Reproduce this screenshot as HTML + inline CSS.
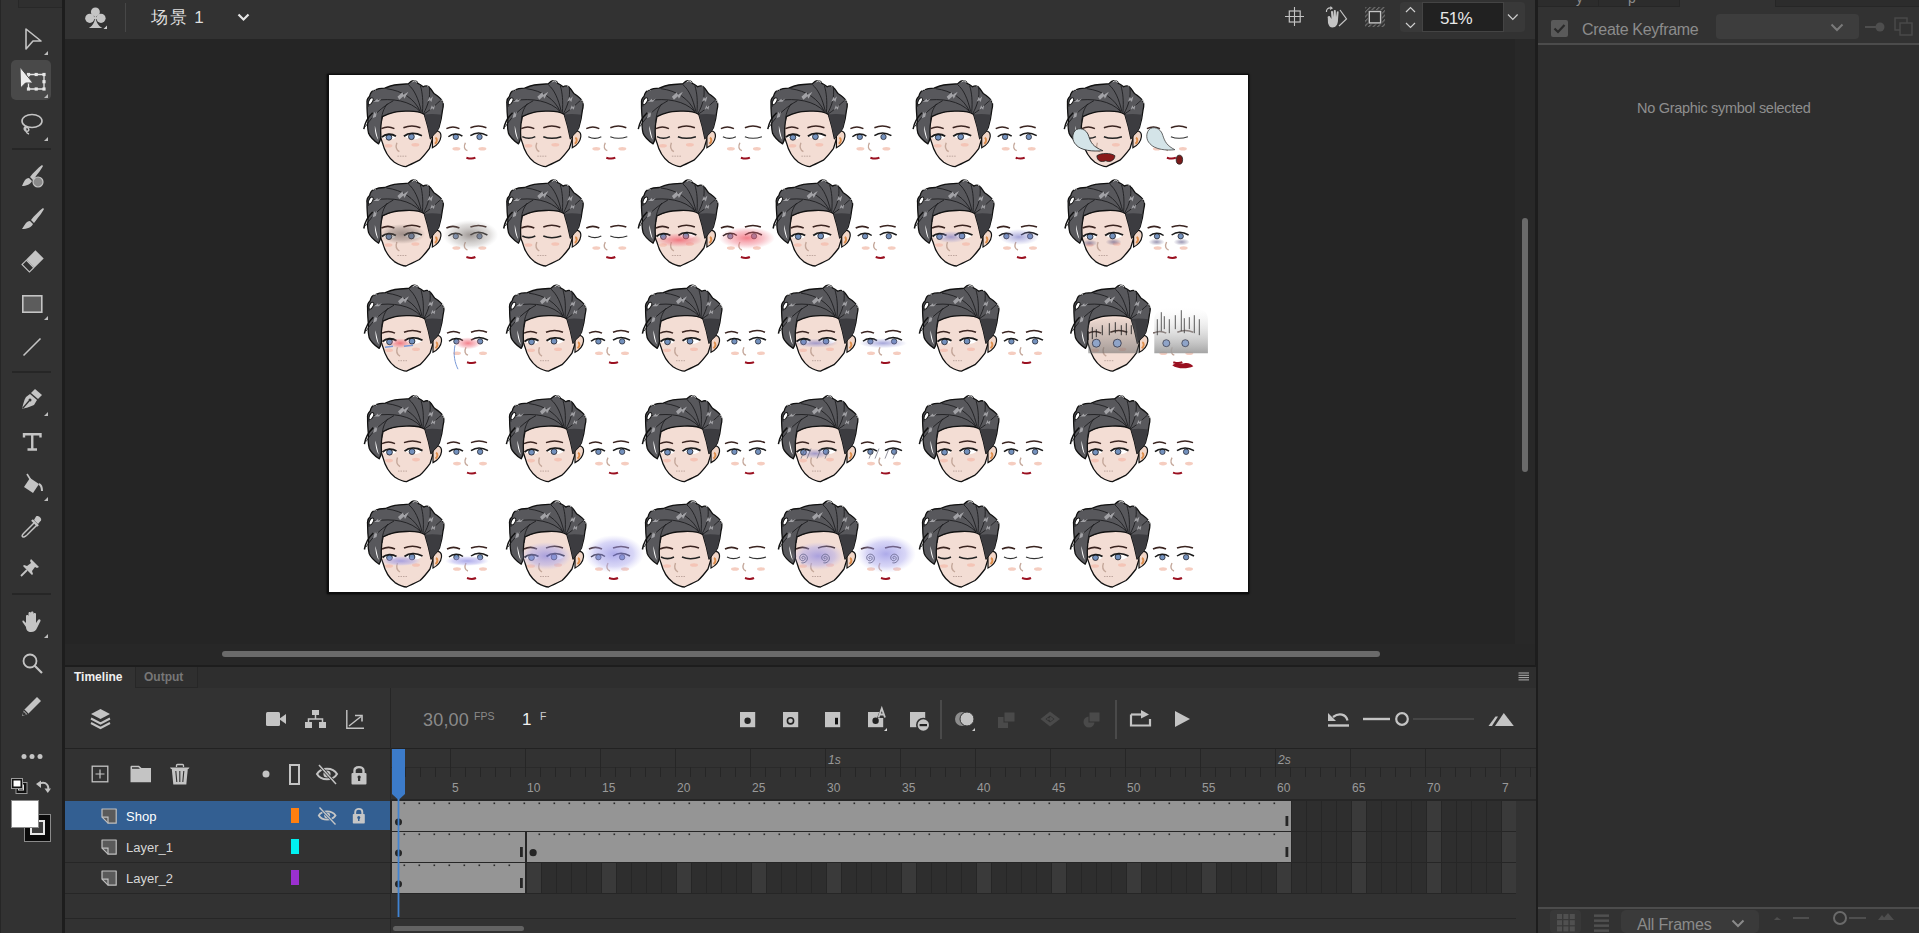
<!DOCTYPE html>
<html><head><meta charset="utf-8">
<style>
*{margin:0;padding:0;box-sizing:border-box}
html,body{width:1919px;height:933px;overflow:hidden;background:#323232;font-family:"Liberation Sans",sans-serif}
.a{position:absolute;white-space:nowrap}
svg{position:absolute;overflow:visible}
</style></head><body>
<div class="a" style="left:0;top:0;width:62px;height:933px;background:#323232"></div>
<div class="a" style="left:0;top:0;width:1px;height:933px;background:#262626"></div>
<div class="a" style="left:18px;top:0;width:44px;height:8px;border:1px solid #282828;border-top:0;border-right:0;background:#2f2f2f"></div>
<div class="a" style="left:62px;top:0;width:3px;height:933px;background:#1d1d1d"></div>
<div class="a" style="left:11px;top:60px;width:40px;height:40px;border-radius:5px;background:#494949"></div>
<div class="a" style="left:12px;top:148px;width:39px;height:2px;background:#262626"></div>
<div class="a" style="left:12px;top:371px;width:39px;height:2px;background:#262626"></div>
<div class="a" style="left:12px;top:593px;width:39px;height:2px;background:#262626"></div>
<svg style="left:24px;top:28px" width="20" height="24"><path d="M2,1 L17,13 L9,13 L2,21 Z" fill="none" stroke="#c4c4c4" stroke-width="1.6" stroke-linejoin="round"/></svg>
<svg style="left:44px;top:51px" width="4" height="4"><path d="M4,0 L4,4 L0,4 Z" fill="#bdbdbd"/></svg>
<svg style="left:18px;top:65px" width="30" height="28"><path d="M10.5,9.5 H26 V24 H10.5 Z" fill="none" stroke="#e6e6e6" stroke-width="1.3"/><rect x="8.9" y="7.9" width="3.2" height="3.2" fill="#e6e6e6"/><rect x="16.599999999999998" y="7.9" width="3.2" height="3.2" fill="#e6e6e6"/><rect x="24.4" y="7.9" width="3.2" height="3.2" fill="#e6e6e6"/><rect x="24.4" y="15.1" width="3.2" height="3.2" fill="#e6e6e6"/><rect x="24.4" y="22.4" width="3.2" height="3.2" fill="#e6e6e6"/><rect x="16.599999999999998" y="22.4" width="3.2" height="3.2" fill="#e6e6e6"/><rect x="8.9" y="22.4" width="3.2" height="3.2" fill="#e6e6e6"/><rect x="8.9" y="15.1" width="3.2" height="3.2" fill="#e6e6e6"/><path d="M2,2 L2.5,23 L7.5,18 L15,18 Z" fill="#ededed" stroke="#494949" stroke-width="1"/></svg>
<svg style="left:44px;top:94px" width="4" height="4"><path d="M4,0 L4,4 L0,4 Z" fill="#bdbdbd"/></svg>
<svg style="left:20px;top:113px" width="24" height="22"><ellipse cx="12" cy="8" rx="10" ry="6.5" fill="none" stroke="#c4c4c4" stroke-width="1.6"/><path d="M6,13 C3,15 4,19 8,18 C10,17 8,14 6,14 C5,17 6,20 9,21" fill="none" stroke="#c4c4c4" stroke-width="1.5"/></svg>
<svg style="left:44px;top:137px" width="4" height="4"><path d="M4,0 L4,4 L0,4 Z" fill="#bdbdbd"/></svg>
<svg style="left:22px;top:164px" width="22" height="24"><path d="M20,1 C16,4 11,9 8,13 L11,16 C14,12 19,6 21,2 Z" fill="#c4c4c4"/><path d="M7,14 C3,14 2,18 0,22 C4,22 9,20 10,17 Z" fill="#c4c4c4"/><circle cx="16" cy="18" r="5" fill="#8a8a8a" stroke="#c4c4c4" stroke-width="1.2"/></svg>
<svg style="left:22px;top:207px" width="22" height="23"><path d="M21,1 C17,4 12,9 9,13 L12,16 C15,12 20,6 22,2 Z" fill="#c4c4c4"/><path d="M8,14 C4,14 3,18 0,22 C5,22 10,20 11,17 Z" fill="#c4c4c4"/></svg>
<svg style="left:21px;top:250px" width="23" height="23"><g transform="rotate(-45 11.5 11.5) translate(11.5 11.5) scale(0.87) translate(-11.5 -11.5)"><rect x="0.5" y="5.5" width="7" height="12" fill="none" stroke="#c4c4c4" stroke-width="1.3"/><rect x="8" y="4.8" width="15" height="13.4" fill="#c4c4c4"/></g></svg>
<svg style="left:22px;top:295px" width="21" height="19"><rect x="0.8" y="0.8" width="19" height="16.4" fill="#5c5c5c" stroke="#c4c4c4" stroke-width="1.6"/></svg>
<svg style="left:44px;top:316px" width="4" height="4"><path d="M4,0 L4,4 L0,4 Z" fill="#bdbdbd"/></svg>
<svg style="left:22px;top:337px" width="20" height="20"><path d="M1.5,18.5 L18.5,1.5" stroke="#c4c4c4" stroke-width="1.6"/></svg>
<svg style="left:21px;top:388px" width="22" height="22"><path d="M14,1 L21,7 L17,11 L10,5 Z" fill="#c4c4c4"/><path d="M9,6 L16,12 L13,17 C9,19 4,20 1,21 C2,17 3,12 5,9 Z" fill="#c4c4c4"/><path d="M1.5,20.5 L8,13" stroke="#323232" stroke-width="1.3"/><circle cx="9" cy="12" r="1.5" fill="#323232"/></svg>
<svg style="left:44px;top:412px" width="4" height="4"><path d="M4,0 L4,4 L0,4 Z" fill="#bdbdbd"/></svg>
<svg style="left:23px;top:433px" width="19" height="18"><path d="M1,4.5 V1.2 H17.5 V4.5 M9.25,1.2 V16.5 M4.5,16.5 H14" fill="none" stroke="#c4c4c4" stroke-width="2.4"/></svg>
<svg style="left:22px;top:473px" width="22" height="22"><path d="M8,5 L17,11 L11,20 L2,14 Z" fill="#c4c4c4"/><path d="M5,1 L10,9" stroke="#c4c4c4" stroke-width="1.6"/><path d="M17,11 C19,12 20,15 20,18" fill="none" stroke="#c4c4c4" stroke-width="2"/></svg>
<svg style="left:44px;top:497px" width="4" height="4"><path d="M4,0 L4,4 L0,4 Z" fill="#bdbdbd"/></svg>
<svg style="left:20px;top:515px" width="23" height="23"><path d="M16,1.5 C18,0 22,3 21,5.5 L18,9 L14,5 Z" fill="#c4c4c4"/><path d="M12,5 L18,11" stroke="#c4c4c4" stroke-width="2.4"/><path d="M14,8 L4,18 C2,20 1.5,21.5 3,22 C4.5,22.5 5.5,21 7,20 L17,10" fill="none" stroke="#c4c4c4" stroke-width="1.5"/></svg>
<svg style="left:20px;top:558px" width="20" height="19"><path d="M11,1 L19,9 L17,10 L15,9 L12,13 L13,16 L12,17 L3,8 L4,7 L7,8 L11,5 L10,3 Z" fill="#c4c4c4"/><path d="M1,18 L7,12" stroke="#c4c4c4" stroke-width="1.8"/></svg>
<svg style="left:22px;top:611px" width="20" height="21"><path d="M4,11 L4,5 C4,3.5 6.5,3.5 6.5,5 L6.5,9 L6.5,2 C6.5,0.5 9,0.5 9,2 L9,9 L9,1.5 C9,0 11.5,0 11.5,1.5 L11.5,9 L11.5,3 C11.5,1.5 14,1.5 14,3 L14,12 L16,9 C17,7.5 19,8.5 18.5,10 L15,17 C14,19.5 12,21 9,21 C6,21 4,19 4,16 Z M4,12 L2,10 C1,9 0,10 0.5,11 L4,16" fill="#c4c4c4"/></svg>
<svg style="left:44px;top:634px" width="4" height="4"><path d="M4,0 L4,4 L0,4 Z" fill="#bdbdbd"/></svg>
<svg style="left:22px;top:653px" width="21" height="22"><circle cx="8" cy="8" r="6.5" fill="none" stroke="#c4c4c4" stroke-width="1.8"/><path d="M12.5,12.5 L20,20" stroke="#c4c4c4" stroke-width="2.2"/></svg>
<svg style="left:21px;top:696px" width="21" height="21"><path d="M16,1 L20,5 L7,18 L1,20 L3,14 Z" fill="#c4c4c4"/><path d="M3,14 L7,18" stroke="#323232" stroke-width="1.2"/><path d="M2.5,15.5 L1.5,19.5 L5.5,18.5" fill="#323232"/></svg>
<svg style="left:21px;top:753px" width="22" height="7"><circle cx="3" cy="3.5" r="2.5" fill="#c4c4c4"/><circle cx="11" cy="3.5" r="2.5" fill="#c4c4c4"/><circle cx="19" cy="3.5" r="2.5" fill="#c4c4c4"/></svg>
<svg style="left:11px;top:778px" width="17" height="16"><rect x="5" y="4.5" width="11" height="11" fill="#111" stroke="#9a9a9a" stroke-width="1"/><rect x="7.5" y="7" width="5" height="5" fill="none" stroke="#ddd" stroke-width="1"/><rect x="0.5" y="0.5" width="11" height="10" fill="#111" stroke="#9a9a9a" stroke-width="1"/><rect x="2.5" y="2.5" width="7" height="6" fill="#fff"/></svg>
<svg style="left:36px;top:779px" width="15" height="15"><path d="M3,5.5 C5,3 9,3 11,5.5 C12.5,7.5 12.5,9 12,10" fill="none" stroke="#c4c4c4" stroke-width="2"/><path d="M0,5 L5,1.5 L5,9 Z" fill="#c4c4c4"/><path d="M8.5,9.5 L15,9.5 L11.8,14 Z" fill="#c4c4c4"/></svg>
<div class="a" style="left:24px;top:814px;width:27px;height:28px;background:#0a0a0a;border:1px solid #8a8a8a"></div>
<div class="a" style="left:30px;top:820px;width:15px;height:15px;border:2px solid #e8e8e8;background:#3c3c3c"></div>
<div class="a" style="left:11px;top:800px;width:28px;height:28px;background:#fff;border:1px solid #8a8a8a"></div>
<div class="a" style="left:65px;top:0;width:1471px;height:39px;background:#323232"></div>
<svg style="left:85px;top:7px" width="23" height="22"><circle cx="10.4" cy="4.9" r="4.5" fill="#c4c4c4"/><circle cx="4.8" cy="11.3" r="4.6" fill="#c4c4c4"/><circle cx="16" cy="11.3" r="4.6" fill="#c4c4c4"/><path d="M10.4,8 C10.4,14 8,19 3.9,21 L17.3,21 C13,19 10.4,14 10.4,8 Z" fill="#c4c4c4"/><path d="M10.4,8 L8,12 L12.8,12 Z" fill="#c4c4c4"/><path d="M22,18.5 L22,22 L18.5,22 Z" fill="#ccc"/></svg>
<div class="a" style="left:125px;top:3px;width:1px;height:29px;background:#474747"></div>
<div class="a" style="left:151px;top:6px;font-size:17px;color:#dedede;line-height:24px;letter-spacing:1.5px">场景 1</div>
<svg style="left:237px;top:13px" width="13" height="9"><path d="M1.5,1.5 L6.5,6.5 L11.5,1.5" fill="none" stroke="#e6e6e6" stroke-width="2.2"/></svg>
<svg style="left:1285px;top:7px" width="19" height="19"><path d="M9.5,0 V19 M0,9.5 H19" stroke="#c4c4c4" stroke-width="1.1"/><rect x="4.3" y="4" width="10.9" height="11" fill="none" stroke="#c4c4c4" stroke-width="1.2"/></svg>
<svg style="left:1324px;top:6px" width="24" height="23"><path d="M19.5,4 L26,13 L18.5,20" transform="translate(-3.5,0)" fill="none" stroke="#c4c4c4" stroke-width="1.2"/><path d="M3.8,12 C3,10.5 5,9.5 6,10.5 L7.5,13 L7,6 C7,4.8 9,4.8 9,6 L9.5,11 L9.8,5 C9.8,3.8 11.8,3.8 11.8,5 L12,11 L12.8,6 C13,4.8 14.8,5 14.6,6.2 L14,14 C14,18 12,21.5 8.5,21.5 C6,21.5 5,20 4,17 Z" fill="#c4c4c4"/><path d="M2.5,6 C2,3.5 4,1.5 7,2" fill="none" stroke="#c4c4c4" stroke-width="1.2"/><path d="M6.5,0 L9,2.2 L6,4 Z" fill="#c4c4c4"/></svg>
<svg style="left:1365px;top:7px" width="21" height="20"><defs><pattern id="hat" width="3.2" height="3.2" patternUnits="userSpaceOnUse" patternTransform="rotate(45)"><rect width="1.2" height="3.2" fill="#727272"/></pattern></defs><rect x="0" y="0" width="20" height="20" rx="1" fill="url(#hat)"/><rect x="2.8" y="3" width="14.4" height="14.4" fill="#323232"/><rect x="4.3" y="4.5" width="11.3" height="11.4" fill="none" stroke="#c4c4c4" stroke-width="1.4"/></svg>
<div class="a" style="left:1400px;top:2px;width:125px;height:30px;border-radius:4px;background:#393939"></div>
<div class="a" style="left:1422px;top:2px;width:82px;height:30px;background:#212121;border:1px solid #444"></div>
<svg style="left:1405px;top:6px" width="12" height="23"><path d="M1,6 L5.5,1.5 L10,6 M1,17 L5.5,21.5 L10,17" fill="none" stroke="#cfcfcf" stroke-width="1.2"/></svg>
<div class="a" style="left:1440px;top:9px;font-size:17px;color:#e8e8e8;line-height:20px;letter-spacing:-0.7px">51%</div>
<svg style="left:1507px;top:13px" width="12" height="8"><path d="M1,1.5 L5.8,6.3 L10.6,1.5" fill="none" stroke="#cfcfcf" stroke-width="1.2"/></svg>
<div class="a" style="left:65px;top:39px;width:1471px;height:626px;background:#252525"></div>
<div class="a" style="left:1515px;top:39px;width:21px;height:626px;background:#282828"></div>
<div class="a" style="left:65px;top:644px;width:1470px;height:21px;background:#272727"></div>
<div class="a" style="left:327px;top:74px;width:922px;height:520px;background:#0e0e0e;box-shadow:0 0 2px #000"></div>
<div id="stage" class="a" style="left:329px;top:75px;width:919px;height:517px;background:#fff;overflow:hidden"><svg width="919" height="517" viewBox="0 0 919 517" style="left:0;top:0"><defs><radialGradient id="rgGray"><stop offset="0" stop-color="#6a5e5a" stop-opacity="0.6"/><stop offset="0.6" stop-color="#6a5e5a" stop-opacity="0.35"/><stop offset="1" stop-color="#6a5e5a" stop-opacity="0"/></radialGradient>
<radialGradient id="rgGray2"><stop offset="0" stop-color="#6a605c" stop-opacity="0.65"/><stop offset="0.7" stop-color="#9a9490" stop-opacity="0.3"/><stop offset="1" stop-color="#bbb" stop-opacity="0"/></radialGradient>
<radialGradient id="rgRed"><stop offset="0" stop-color="#f04a5a" stop-opacity="0.7"/><stop offset="0.6" stop-color="#f07080" stop-opacity="0.4"/><stop offset="1" stop-color="#f07080" stop-opacity="0"/></radialGradient>
<radialGradient id="rgBlue"><stop offset="0" stop-color="#6a6ac0" stop-opacity="0.6"/><stop offset="0.6" stop-color="#8a8ad0" stop-opacity="0.3"/><stop offset="1" stop-color="#8a8ad0" stop-opacity="0"/></radialGradient>
<radialGradient id="rgUnder"><stop offset="0" stop-color="#5a5280" stop-opacity="0.6"/><stop offset="1" stop-color="#5a5280" stop-opacity="0"/></radialGradient>
<radialGradient id="rgPurple"><stop offset="0" stop-color="#8a86e0" stop-opacity="0.7"/><stop offset="0.65" stop-color="#a8a4ec" stop-opacity="0.45"/><stop offset="1" stop-color="#c0bcf4" stop-opacity="0"/></radialGradient>
<filter id="bl" x="-30%" y="-50%" width="160%" height="200%"><feGaussianBlur stdDeviation="1.5"/></filter>
<linearGradient id="gShade" x1="0" y1="0" x2="0" y2="1"><stop offset="0" stop-color="#806a66" stop-opacity="0"/><stop offset="0.6" stop-color="#6a5e5a" stop-opacity="0.5"/><stop offset="1" stop-color="#6a5e5a" stop-opacity="0.1"/></linearGradient>
<radialGradient id="gShade2" cx="0.5" cy="0.6" r="0.6"><stop offset="0" stop-color="#7a706c" stop-opacity="0.6"/><stop offset="1" stop-color="#ccc" stop-opacity="0.1"/></radialGradient>
<linearGradient id="gBig" x1="0" y1="0" x2="0" y2="1"><stop offset="0" stop-color="#777" stop-opacity="0.05"/><stop offset="1" stop-color="#666" stop-opacity="0.55"/></linearGradient>
<linearGradient id="gBig2" x1="0" y1="0" x2="0" y2="1"><stop offset="0" stop-color="#fff" stop-opacity="0.2"/><stop offset="1" stop-color="#9a9a9a" stop-opacity="0.9"/></linearGradient>
<symbol id="hd" overflow="visible">
 <path d="M19,36 C17,46 17,56 20,62 C22,70 26,77 32,81.6 C36,84 40,86 43.5,86 C48,84 53,81.5 57,79.5 C61,76 64,72 67,68 L71,55 L62,33 C58,30 50,29 43,29.5 C36,30 28,31 19,36 Z" fill="#f3ddd4" stroke="#111" stroke-width="1.3"/>
 <path d="M70,52 C74,48 79,51 78.5,56 C78,60 76,64 70,67 Z" fill="#f1d6c8" stroke="#111" stroke-width="1.2"/>
 <path d="M73,57 C75,58 75,61 72.5,63" fill="none" stroke="#e0904e" stroke-width="2"/>
 <path d="M4.6,23 C4,19 5.5,17 7.2,15.5 C8,12 10,10 11.5,9.6 C15,8 19,7.5 22.3,7.5 C26,6 29,4.8 31.9,4.3 C37,3.5 42,3.4 45.8,3.2 C48,1 50,0 51.2,0 C53,0 55,1.5 55.5,2.7 C57.5,3.5 59.5,5 60.8,6.1 C62.5,5 65,5 66.7,5.9 C68.5,8 70,11 71.6,12.8 C75,15 78,17 79.6,19.8 C81.5,22 81,26 80.1,29.5 C79.5,36 78,42 76.5,47 C75,50 73,52.5 71.5,53.5 L68,58 C66.5,50 64.5,42 61.9,33.7 C58,31 50,30.2 43.2,30.5 C37,30.8 33,31.3 29.8,32.1 C26,33 23,34.5 20.1,35.9 C18.5,42 18,50 18.5,56 C18,60 17,62 16.2,63.2 C11,60 7,55 6.2,52.6 C5,47 5,43 5.6,40.8 C5,35 4.5,29 4.6,23 Z" fill="#58585c" stroke="#111" stroke-width="1.3" stroke-linejoin="round"/>
 <path d="M10.3,32 C6,36 2.5,42 1.4,48.5" fill="none" stroke="#111" stroke-width="1.5"/>
 <path d="M12.5,45 C13.5,50 14.5,54 15.8,59 C13.5,56 12.2,50 12.5,45 Z" fill="#fff"/>
 <ellipse cx="8.3" cy="20.5" rx="1.8" ry="3.8" fill="#fff" stroke="#111" stroke-width="0.9" transform="rotate(28 8.3 20.5)"/>
 <path d="M61.9,33.7 C64.5,42 66.5,50 68,58 L71.5,53.5 C73,52.5 75,50 76.5,47 C77.5,43 78.5,38 79,34 C73,33 67,33 61.9,33.7 Z" fill="#3c3c40"/>
 <path d="M58,31 C48,20 30,17 11,20 M58,31 C52,18 40,10 24,8 M59,31 C56,18 52,9 46,4 M60,32 C61,20 60,12 58,5 M61,33 C66,24 68,16 67,7 M62,33 C70,28 75,22 78,20 M25,23 C21,28 19,34 19,42 M31,20 C20,26 10,35 3,46 M8,17 C6,20 5.5,23 6,26" fill="none" stroke="#1a1a1c" stroke-width="0.85"/>
 <path d="M35,16 L40,11.5 L41,14 L46,11 L42,18 L41,15.5 L37,19 Z M65,21 L67,16 L68,18 L70.5,15.5 L69,21.4 L67.5,19.5 Z M67.5,29.5 L69.5,24.5 L70.5,26.5 L72.6,24.1 L71.5,29 L70,27.5 Z M11,21 L15,18 L15.5,19.5 L19,17.7 L16,21 Z M10,37.5 L12,31 L13,33 L14.7,30.5 L13.5,36 Z" fill="#a2a2a6"/>
 <path d="M50,1.5 C51,-0.5 54,0 54.5,2 M65,5.5 C66,4.5 68,5 68.5,7 M79,19.5 C80.5,19 81.5,21 80.8,22.5 M10.5,10 C11,8.5 13,8.5 13.5,9.5" fill="none" stroke="#fff" stroke-width="0.9"/>
 <path d="M19,48 C23,46 28,46 32,48 M41,47 C46,45 53,45 58,47" fill="none" stroke="#3a2420" stroke-width="1.5"/>
 <ellipse cx="26" cy="65" rx="4" ry="1.8" fill="#f3b9a9" opacity="0.7"/>
 <ellipse cx="53" cy="64" rx="4" ry="1.8" fill="#f3b9a9" opacity="0.7"/>
 <path d="M34.5,62 C33,66 33.5,69 37,71" fill="none" stroke="#c4a79a" stroke-width="1.4"/>
 <path d="M35,75.5 L44,75.5" stroke="#b09890" stroke-width="0.8" stroke-dasharray="1.5,1"/>
</symbol>
<symbol id="eo" overflow="visible">
 <path d="M20,56.5 C24,59.5 30,59.5 33,57 L33,55.5 C29,53 24,53 20,56.5 Z M42,55.5 C47,59.5 54,59.5 59,56 C54,52.5 47,52.5 42,55.5 Z" fill="#fff"/>
 <circle cx="26.5" cy="56.6" r="2.9" fill="#7391bd" stroke="#1a1a22" stroke-width="0.8"/>
 <circle cx="49" cy="56" r="2.9" fill="#7391bd" stroke="#1a1a22" stroke-width="0.8"/>
 <path d="M19.5,56.5 C23,53 29,52.5 33.5,55.5 M41.5,55.5 C46,52 53,51.5 59.5,55" fill="none" stroke="#1a1a1a" stroke-width="1.8"/>
 <circle cx="93.4" cy="56.2" r="2.7" fill="#7391bd" stroke="#1a1a22" stroke-width="0.7"/>
 <circle cx="117.1" cy="56.2" r="2.7" fill="#7391bd" stroke="#1a1a22" stroke-width="0.7"/>
 <path d="M86,56 C90,52.5 96,52.5 100,55.5 M108,55 C113,51.5 119,51.5 125,55" fill="none" stroke="#1a1a1a" stroke-width="1.5"/>
</symbol>
<symbol id="ec" overflow="visible">
 <path d="M20,56 C24,58 29,58 33,56 M41,56 C46,58 53,58 59,56" fill="none" stroke="#222" stroke-width="1.5"/>
 <path d="M86,56 C90,58 95,58 99,56 M108,56 C113,58 119,58 125,56" fill="none" stroke="#333" stroke-width="1.2"/>
</symbol>
<symbol id="ex" overflow="visible">
 <path d="M84,48 C88,46 93,46 97,48 M108,47 C113,45 119,45 124,47" fill="none" stroke="#3a2420" stroke-width="1.5"/>
 <ellipse cx="94" cy="68" rx="4" ry="1.8" fill="#f3c0b0" opacity="0.8"/>
 <ellipse cx="120" cy="68" rx="4" ry="1.8" fill="#f3c0b0" opacity="0.8"/>
 <path d="M103,62 C101,66 102,69 105,70" fill="none" stroke="#c4a79a" stroke-width="1.4"/>
 <path d="M104,77 C107,78 111,78 113,77" fill="none" stroke="#9a1020" stroke-width="2"/>
</symbol>
</defs><g transform="translate(33.4,5.7)"><use href="#hd"/><use href="#ex"/><use href="#eo"/></g><g transform="translate(173.3,5.7)"><use href="#hd"/><use href="#ex"/><use href="#ec"/></g><g transform="translate(307.9,5.7)"><use href="#hd"/><use href="#ex"/><use href="#ec"/></g><g transform="translate(437.4,5.7)"><use href="#hd"/><use href="#ex"/><use href="#eo"/></g><g transform="translate(582.7,5.7)"><use href="#hd"/><use href="#ex"/><use href="#eo"/></g><g transform="translate(733.9,5.7)"><use href="#hd"/><use href="#ex"/><use href="#ec"/><path d="M12,50 C16,46 24,48 26,56 C28,62 30,66 40,70 C30,71 18,70 13,64 C9,60 9,54 12,50 Z" fill="#d4e4e8" stroke="#333" stroke-width="0.9"/><path d="M86,49 C90,45 98,47 100,55 C102,61 104,65 112,69 C104,70 92,69 87,63 C83,59 83,53 86,49 Z" fill="#d4e4e8" stroke="#444" stroke-width="0.8"/><path d="M34,75 C38,72 48,72 52,75 C52,80 46,82 43,80 C38,82 34,80 34,75 Z" fill="#8a1a1a" stroke="#222" stroke-width="0.8"/><ellipse cx="116.5" cy="79" rx="3.2" ry="4.5" fill="#7a1a1a" stroke="#222" stroke-width="0.8"/></g><g transform="translate(33.4,105.0)"><use href="#hd"/><use href="#ex"/><use href="#eo"/><ellipse cx="40" cy="54" rx="23" ry="10" fill="url(#rgGray)"/><ellipse cx="108" cy="55" rx="28" ry="15" fill="url(#rgGray2)"/></g><g transform="translate(173.3,105.0)"><use href="#hd"/><use href="#ex"/><use href="#ec"/></g><g transform="translate(307.9,105.0)"><use href="#hd"/><use href="#ex"/><use href="#eo"/><ellipse cx="42" cy="60" rx="24" ry="7" fill="url(#rgRed)"/><ellipse cx="110" cy="58" rx="28" ry="11" fill="url(#rgRed)"/></g><g transform="translate(442.7,105.0)"><use href="#hd"/><use href="#ex"/><use href="#eo"/></g><g transform="translate(584.0,105.0)"><use href="#hd"/><use href="#ex"/><use href="#eo"/><ellipse cx="38" cy="57" rx="16" ry="6" fill="url(#rgBlue)"/><ellipse cx="106" cy="57" rx="20" ry="8" fill="url(#rgBlue)"/></g><g transform="translate(734.6,105.0)"><use href="#hd"/><use href="#ex"/><use href="#eo"/><ellipse cx="26" cy="63" rx="8" ry="3.5" fill="url(#rgUnder)"/><ellipse cx="50" cy="62" rx="8" ry="3.5" fill="url(#rgUnder)"/><ellipse cx="93" cy="62" rx="8" ry="3.5" fill="url(#rgUnder)"/><ellipse cx="118" cy="62" rx="8" ry="3.5" fill="url(#rgUnder)"/></g><g transform="translate(34.0,210.2)"><use href="#hd"/><use href="#ex"/><use href="#eo"/><ellipse cx="37" cy="58" rx="11" ry="5" fill="url(#rgRed)"/><ellipse cx="105" cy="58" rx="13" ry="6" fill="url(#rgRed)"/><path d="M22,62 L30,61 M41,61 L50,60" stroke="#7a9ad8" stroke-width="1.5"/><path d="M92,60 C90,70 92,78 95,84" fill="none" stroke="#7a9ad8" stroke-width="1"/></g><g transform="translate(176.0,210.2)"><use href="#hd"/><use href="#ex"/><use href="#eo"/></g><g transform="translate(312.0,210.2)"><use href="#hd"/><use href="#ex"/><use href="#eo"/></g><g transform="translate(448.0,210.2)"><use href="#hd"/><use href="#ex"/><use href="#eo"/><ellipse cx="39" cy="58" rx="22" ry="4.5" fill="url(#rgBlue)"/><ellipse cx="106" cy="58" rx="24" ry="5" fill="url(#rgBlue)"/></g><g transform="translate(589.0,210.2)"><use href="#hd"/><use href="#ex"/><use href="#eo"/></g><g transform="translate(740.3,210.2)"><use href="#hd"/><use href="#ex"/><path d="M18,40 C25,33 50,30 66,36 L70,68 L19,68 Z" fill="url(#gBig)"/><path d="M19,46 V55 M23,42 V54 M27,44 V52 M33,40 V50 M40,38 V50 M46,37 V48 M52,40 V50 M57,38 V50 M62,40 V49" stroke="#222" stroke-width="0.9"/><circle cx="27" cy="58" r="4" fill="#8fa4c8" stroke="#334" stroke-width="0.8"/><circle cx="48" cy="58" r="4" fill="#8fa4c8" stroke="#334" stroke-width="0.8"/><path d="M85,68 V34 C85,26 92,22.7 100,22.7 H124 C132,22.7 138.6,26 138.6,34 V68 Z" fill="url(#gBig2)"/><path d="M88,50 V34 M92,46 V27 M95,44 V31 M100,48 V34 M106,44 V30 M112,46 V25 M115,48 V33 M120,44 V32 M125,48 V30 M130,50 V34" stroke="#333" stroke-width="0.8"/><circle cx="97" cy="58" r="3.5" fill="#8fa4c8" stroke="#334" stroke-width="0.7"/><circle cx="116" cy="58" r="3.5" fill="#8fa4c8" stroke="#334" stroke-width="0.7"/><path d="M103,80 C107,77 112,79 115,78 C119,77 122,79 124,81 C118,84 108,84 103,80 Z" fill="#9a1020"/></g><g transform="translate(34.0,320.6)"><use href="#hd"/><use href="#ex"/><use href="#eo"/></g><g transform="translate(176.0,320.6)"><use href="#hd"/><use href="#ex"/><use href="#eo"/></g><g transform="translate(312.0,320.6)"><use href="#hd"/><use href="#ex"/><use href="#eo"/></g><g transform="translate(448.0,320.6)"><use href="#hd"/><use href="#ex"/><use href="#eo"/><ellipse cx="38" cy="58" rx="16" ry="5" fill="url(#rgBlue)"/><path d="M24,63 L28,53 M30,63 L34,53 M40,63 L44,53 M48,63 L52,53" stroke="#667" stroke-width="0.7"/><path d="M92,63 L96,53 M98,63 L102,53 M108,63 L112,53 M116,63 L120,53" stroke="#667" stroke-width="0.7"/></g><g transform="translate(589.0,320.6)"><use href="#hd"/><use href="#ex"/><use href="#eo"/></g><g transform="translate(740.0,320.6)"><use href="#hd"/><use href="#ex"/><use href="#eo"/></g><g transform="translate(34.0,426.0)"><use href="#hd"/><use href="#ex"/><use href="#eo"/><ellipse cx="38" cy="60" rx="20" ry="5" fill="url(#rgPurple)"/><ellipse cx="104" cy="60" rx="22" ry="5" fill="url(#rgPurple)"/></g><g transform="translate(176.0,426.0)"><use href="#hd"/><use href="#ex"/><use href="#eo"/><ellipse cx="41" cy="55" rx="26" ry="14" fill="url(#rgPurple)"/><ellipse cx="109" cy="53" rx="30" ry="19" fill="url(#rgPurple)"/></g><g transform="translate(312.0,426.0)"><use href="#hd"/><use href="#ex"/><use href="#ec"/></g><g transform="translate(448.0,426.0)"><use href="#hd"/><use href="#ex"/><ellipse cx="41" cy="55" rx="26" ry="14" fill="url(#rgPurple)"/><ellipse cx="109" cy="53" rx="30" ry="19" fill="url(#rgPurple)"/><polyline points="26.00,57.00 26.08,57.02 26.15,57.08 26.19,57.17 26.19,57.27 26.15,57.39 26.06,57.50 25.93,57.58 25.77,57.62 25.58,57.62 25.38,57.56 25.19,57.43 25.03,57.25 24.92,57.01 24.86,56.73 24.89,56.43 24.99,56.13 25.18,55.85 25.45,55.61 25.79,55.43 26.17,55.34 26.59,55.35 27.01,55.47 27.41,55.70 27.75,56.04 28.01,56.46 28.17,56.95 28.20,57.49 28.09,58.04 27.85,58.56 27.47,59.02 26.98,59.39 26.39,59.64 25.74,59.74 25.07,59.68 24.41,59.45 23.81,59.05 23.31,58.51 22.95,57.85 22.75,57.10 22.74,56.31 22.92,55.51 23.30,54.77 23.86,54.12 24.58,53.62 25.41,53.30 26.32,53.18 27.25,53.29 28.14,53.62 28.95,54.17 29.61,54.92 30.08,55.81 30.33,56.82 30.33,57.87 30.07,58.92 29.56,59.88 28.82,60.72 27.89,61.36 26.81,61.77 25.64,61.90 24.45,61.76" fill="none" stroke="#6a6a90" stroke-width="0.9"/><polyline points="48.00,57.00 48.08,57.02 48.15,57.08 48.19,57.17 48.19,57.27 48.15,57.39 48.06,57.50 47.93,57.58 47.77,57.62 47.58,57.62 47.38,57.56 47.19,57.43 47.03,57.25 46.92,57.01 46.86,56.73 46.89,56.43 46.99,56.13 47.18,55.85 47.45,55.61 47.79,55.43 48.17,55.34 48.59,55.35 49.01,55.47 49.41,55.70 49.75,56.04 50.01,56.46 50.17,56.95 50.20,57.49 50.09,58.04 49.85,58.56 49.47,59.02 48.98,59.39 48.39,59.64 47.74,59.74 47.07,59.68 46.41,59.45 45.81,59.05 45.31,58.51 44.95,57.85 44.75,57.10 44.74,56.31 44.92,55.51 45.30,54.77 45.86,54.12 46.58,53.62 47.41,53.30 48.32,53.18 49.25,53.29 50.14,53.62 50.95,54.17 51.61,54.92 52.08,55.81 52.33,56.82 52.33,57.87 52.07,58.92 51.56,59.88 50.82,60.72 49.89,61.36 48.81,61.77 47.64,61.90 46.45,61.76" fill="none" stroke="#6a6a90" stroke-width="0.9"/><polyline points="93.00,57.00 93.08,57.02 93.15,57.08 93.19,57.17 93.19,57.27 93.15,57.39 93.06,57.50 92.93,57.58 92.77,57.62 92.58,57.62 92.38,57.56 92.19,57.43 92.03,57.25 91.92,57.01 91.86,56.73 91.89,56.43 91.99,56.13 92.18,55.85 92.45,55.61 92.79,55.43 93.17,55.34 93.59,55.35 94.01,55.47 94.41,55.70 94.75,56.04 95.01,56.46 95.17,56.95 95.20,57.49 95.09,58.04 94.85,58.56 94.47,59.02 93.98,59.39 93.39,59.64 92.74,59.74 92.07,59.68 91.41,59.45 90.81,59.05 90.31,58.51 89.95,57.85 89.75,57.10 89.74,56.31 89.92,55.51 90.30,54.77 90.86,54.12 91.58,53.62 92.41,53.30 93.32,53.18 94.25,53.29 95.14,53.62 95.95,54.17 96.61,54.92 97.08,55.81 97.33,56.82 97.33,57.87 97.07,58.92 96.56,59.88 95.82,60.72 94.89,61.36 93.81,61.77 92.64,61.90 91.45,61.76" fill="none" stroke="#6a6a90" stroke-width="0.9"/><polyline points="117.00,57.00 117.08,57.02 117.15,57.08 117.19,57.17 117.19,57.27 117.15,57.39 117.06,57.50 116.93,57.58 116.77,57.62 116.58,57.62 116.38,57.56 116.19,57.43 116.03,57.25 115.92,57.01 115.86,56.73 115.89,56.43 115.99,56.13 116.18,55.85 116.45,55.61 116.79,55.43 117.17,55.34 117.59,55.35 118.01,55.47 118.41,55.70 118.75,56.04 119.01,56.46 119.17,56.95 119.20,57.49 119.09,58.04 118.85,58.56 118.47,59.02 117.98,59.39 117.39,59.64 116.74,59.74 116.07,59.68 115.41,59.45 114.81,59.05 114.31,58.51 113.95,57.85 113.75,57.10 113.74,56.31 113.92,55.51 114.30,54.77 114.86,54.12 115.58,53.62 116.41,53.30 117.32,53.18 118.25,53.29 119.14,53.62 119.95,54.17 120.61,54.92 121.08,55.81 121.33,56.82 121.33,57.87 121.07,58.92 120.56,59.88 119.82,60.72 118.89,61.36 117.81,61.77 116.64,61.90 115.45,61.76" fill="none" stroke="#6a6a90" stroke-width="0.9"/></g><g transform="translate(589.0,426.0)"><use href="#hd"/><use href="#ex"/><use href="#ec"/></g><g transform="translate(740.0,426.0)"><use href="#hd"/><use href="#ex"/><use href="#eo"/></g></svg></div>
<div class="a" style="left:1522px;top:218px;width:6px;height:254px;border-radius:3px;background:#6a6a6a"></div>
<div class="a" style="left:222px;top:651px;width:1158px;height:5.5px;border-radius:3px;background:#6a6a6a"></div>
<div class="a" style="left:1535px;top:0;width:3px;height:933px;background:#1d1d1d"></div>
<div class="a" style="left:1538px;top:0;width:381px;height:933px;background:#323232"></div>
<div class="a" style="left:1538px;top:45px;width:381px;height:862px;background:#2e2e2e"></div>
<div class="a" style="left:1538px;top:0;width:381px;height:7px;background:#2a2a2a"></div>
<div class="a" style="left:1538px;top:0;width:61px;height:7px;background:#2c2c2c;border-right:1px solid #262626;border-bottom:1px solid #262626"></div>
<div class="a" style="left:1599px;top:0;width:81px;height:7px;background:#2c2c2c;border-right:1px solid #262626;border-bottom:1px solid #262626"></div>
<div class="a" style="left:1680px;top:0;width:95px;height:7px;background:#323232"></div>
<div class="a" style="left:1775px;top:0;width:144px;height:7px;background:#2c2c2c;border-left:1px solid #262626;border-bottom:1px solid #262626"></div>
<div class="a" style="left:1576px;top:-9px;font-size:14px;color:#8a8a8a;line-height:14px">y</div>
<div class="a" style="left:1628px;top:-9px;font-size:14px;color:#8a8a8a;line-height:14px">p</div>
<div class="a" style="left:1551px;top:20px;width:17px;height:17px;border-radius:2px;background:#5a5a5a"></div>
<svg style="left:1553px;top:23px" width="13" height="11"><path d="M1.5,5.5 L5,9 L11.5,2" fill="none" stroke="#2a2a2a" stroke-width="2.2"/></svg>
<div class="a" style="left:1582px;top:20px;font-size:16px;color:#8c8c8c;line-height:20px;letter-spacing:-0.3px">Create Keyframe</div>
<div class="a" style="left:1716px;top:14px;width:143px;height:25px;border-radius:4px;background:#3d3d3d"></div>
<svg style="left:1830px;top:23px" width="14" height="9"><path d="M1.5,1.5 L7,7 L12.5,1.5" fill="none" stroke="#7a7a7a" stroke-width="2"/></svg>
<svg style="left:1865px;top:21px" width="21" height="12"><path d="M0,6 H14" stroke="#4e4e4e" stroke-width="2"/><circle cx="15" cy="6" r="4.5" fill="#4e4e4e"/></svg>
<svg style="left:1894px;top:17px" width="20" height="19"><rect x="1" y="1" width="12" height="12" fill="none" stroke="#4a4a4a" stroke-width="1.4"/><rect x="6" y="6" width="12" height="12" fill="#323232" stroke="#4a4a4a" stroke-width="1.4"/></svg>
<div class="a" style="left:1538px;top:43px;width:381px;height:2px;background:#4c4c4c"></div>
<div class="a" style="left:1637px;top:98px;font-size:14.5px;color:#8e8e8e;line-height:20px;letter-spacing:-0.3px">No Graphic symbol selected</div>
<div class="a" style="left:1538px;top:907px;width:381px;height:2px;background:#4c4c4c"></div>
<div class="a" style="left:1550px;top:910px;width:31px;height:23px;border-radius:4px;background:#383838"></div>
<svg style="left:1557px;top:914px" width="19" height="19"><rect x="0.0" y="0.0" width="5" height="5" fill="#505050"/><rect x="0.0" y="6.2" width="5" height="5" fill="#505050"/><rect x="0.0" y="12.4" width="5" height="5" fill="#505050"/><rect x="6.4" y="0.0" width="5" height="5" fill="#505050"/><rect x="6.4" y="6.2" width="5" height="5" fill="#505050"/><rect x="6.4" y="12.4" width="5" height="5" fill="#505050"/><rect x="12.8" y="0.0" width="5" height="5" fill="#505050"/><rect x="12.8" y="6.2" width="5" height="5" fill="#505050"/><rect x="12.8" y="12.4" width="5" height="5" fill="#505050"/></svg>
<svg style="left:1594px;top:914px" width="16" height="19"><rect x="0" y="0.4" width="15" height="2.5" fill="#505050"/><rect x="0" y="5.4" width="15" height="2.5" fill="#505050"/><rect x="0" y="10.4" width="15" height="2.5" fill="#505050"/><rect x="0" y="15.4" width="15" height="2.5" fill="#505050"/></svg>
<div class="a" style="left:1621px;top:910px;width:138px;height:23px;border-radius:5px;background:#3a3a3a"></div>
<div class="a" style="left:1637px;top:915px;font-size:16px;color:#8a8a8a;line-height:20px;letter-spacing:-0.2px">All Frames</div>
<svg style="left:1731px;top:919px" width="14" height="9"><path d="M1.5,1.5 L7,7 L12.5,1.5" fill="none" stroke="#8a8a8a" stroke-width="2"/></svg>
<svg style="left:1774px;top:913px" width="145" height="20"><path d="M0,7 L3,4 L7,7 Z" fill="#4e4e4e"/><path d="M19,5 H35" stroke="#4e4e4e" stroke-width="2"/><circle cx="66" cy="5" r="6" fill="none" stroke="#6a6a6a" stroke-width="2"/><path d="M75,5 H92" stroke="#4e4e4e" stroke-width="2"/><path d="M104,7 L108,2 L112,7 Z M108,7 L114,0 L120,7 Z" fill="#4e4e4e"/></svg>
<div class="a" style="left:65px;top:665px;width:1471px;height:2px;background:#1d1d1d"></div>
<div class="a" style="left:65px;top:667px;width:1471px;height:266px;background:#323232"></div>
<div class="a" style="left:65px;top:667px;width:1471px;height:21px;background:#2e2e2e"></div>
<div class="a" style="left:65px;top:667px;width:70px;height:21px;background:#323232"></div>
<div class="a" style="left:135px;top:667px;width:63px;height:21px;background:#2f2f2f;border:1px solid #272727;border-top:0"></div>
<div class="a" style="left:74px;top:669px;font-size:12px;font-weight:bold;color:#f0f0f0;line-height:16px">Timeline</div>
<div class="a" style="left:144px;top:669px;font-size:12px;font-weight:bold;color:#777;line-height:16px">Output</div>
<svg style="left:1518px;top:672px" width="12" height="9"><path d="M0.5,1 H11 M0.5,3.3 H11 M0.5,5.6 H11 M0.5,7.9 H11" stroke="#bdbdbd" stroke-width="0.9"/></svg>
<div class="a" style="left:65px;top:748px;width:1471px;height:1px;background:#222"></div>
<div class="a" style="left:390px;top:688px;width:1px;height:245px;background:#262626"></div>
<svg style="left:90px;top:709px" width="21" height="21"><path d="M10.5,0 L20,5 L10.5,10 L1,5 Z" fill="#c4c4c4"/><path d="M1,9.5 L10.5,14.5 L20,9.5 M1,14 L10.5,19 L20,14" fill="none" stroke="#c4c4c4" stroke-width="2"/></svg>
<svg style="left:266px;top:711px" width="21" height="16"><rect x="0" y="1" width="14" height="14" rx="1.5" fill="#c4c4c4"/><path d="M13,8 L20,3 L20,13 Z" fill="#c4c4c4"/></svg>
<svg style="left:305px;top:710px" width="21" height="18"><rect x="7" y="0" width="7" height="5" fill="#c4c4c4"/><rect x="0" y="12" width="7" height="6" fill="#c4c4c4"/><rect x="14" y="12" width="7" height="6" fill="#c4c4c4"/><path d="M10.5,5 V9 M3.5,12 V9 H17.5 V12" fill="none" stroke="#c4c4c4" stroke-width="1.5"/></svg>
<svg style="left:346px;top:710px" width="19" height="19"><path d="M0.8,0 V18.2 H18" fill="none" stroke="#c4c4c4" stroke-width="1.4"/><path d="M3,16 L15,6.5" stroke="#c4c4c4" stroke-width="1.4"/><path d="M9,5.5 H16 V11.5" fill="none" stroke="#c4c4c4" stroke-width="1.6"/></svg>
<div class="a" style="left:423px;top:709px;font-size:18px;color:#8a8a8a;line-height:22px;letter-spacing:0.2px">30,00</div>
<div class="a" style="left:474px;top:710px;font-size:10.5px;color:#8a8a8a;line-height:12px">FPS</div>
<div class="a" style="left:522px;top:710px;font-size:17px;color:#f0f0f0;line-height:20px">1</div>
<div class="a" style="left:540px;top:710px;font-size:10.5px;color:#cfcfcf;line-height:12px">F</div>
<svg style="left:740px;top:712px" width="20" height="20"><rect x="0" y="0" width="15.2" height="15.2" fill="#c4c4c4"/><circle cx="7.6" cy="8.8" r="3.2" fill="#222"/></svg>
<svg style="left:783px;top:712px" width="20" height="20"><rect x="0" y="0" width="15.2" height="15.2" fill="#c4c4c4"/><circle cx="7.5" cy="8.8" r="3.1" fill="none" stroke="#222" stroke-width="1.6"/></svg>
<svg style="left:825px;top:712px" width="20" height="20"><rect x="0" y="0" width="15.2" height="15.2" fill="#c4c4c4"/><rect x="10" y="5.8" width="3" height="6.6" fill="#111"/></svg>
<svg style="left:868px;top:706px" width="22" height="26"><rect x="0" y="6" width="15.2" height="15.2" fill="#c4c4c4"/><circle cx="7.6" cy="14.8" r="3.2" fill="#222"/><path d="M9,12 L13,1.5 L17.5,12 Z" fill="#323232"/><path d="M10.5,11.5 L13.8,2.5 L17,11.5 M11.7,8.5 H15.8" fill="none" stroke="#c4c4c4" stroke-width="1.8"/><path d="M19,22 L19,25 L16,25 Z" fill="#ddd"/></svg>
<svg style="left:910px;top:712px" width="22" height="22"><rect x="0" y="0" width="15.2" height="15.2" fill="#c4c4c4"/><circle cx="13.3" cy="13" r="6.5" fill="#c4c4c4" stroke="#323232" stroke-width="1.6"/><rect x="9.6" y="12" width="7.4" height="2.2" fill="#222"/></svg>
<div class="a" style="left:940px;top:700px;width:2px;height:39px;background:#4a4a4a"></div>
<svg style="left:954px;top:711px" width="26" height="22"><circle cx="8" cy="8" r="7" fill="#8c8c8c"/><circle cx="13" cy="8" r="7" fill="#c4c4c4" stroke="#323232" stroke-width="1"/><path d="M21,17 L21,20 L18,20 Z" fill="#ccc"/></svg>
<svg style="left:998px;top:711px" width="20" height="18"><rect x="0" y="6" width="10" height="11" fill="#4a4a4a"/><rect x="6" y="1" width="11" height="10" fill="#4a4a4a" stroke="#323232" stroke-width="1"/></svg>
<svg style="left:1040px;top:711px" width="22" height="17"><path d="M10,0.5 L20,8 L10,15.5 L0.5,8 Z" fill="#4a4a4a"/><path d="M10,4.5 L14.5,8 L10,11.5 L5.5,8 Z" fill="#323232"/><path d="M7,8 H12 M10,6 L12.5,8 L10,10" fill="none" stroke="#4a4a4a" stroke-width="1.3"/></svg>
<svg style="left:1083px;top:711px" width="20" height="18"><circle cx="6" cy="11" r="5.5" fill="#4a4a4a"/><rect x="6" y="1" width="11" height="10" fill="#4a4a4a" stroke="#323232" stroke-width="1"/></svg>
<div class="a" style="left:1115px;top:700px;width:2px;height:39px;background:#4a4a4a"></div>
<svg style="left:1130px;top:710px" width="22" height="17"><path d="M1,4.5 V15.5 H20 V9" fill="none" stroke="#c4c4c4" stroke-width="2.2"/><path d="M1,4.5 H12" stroke="#c4c4c4" stroke-width="2.2"/><path d="M11,0 L19,4.5 L11,8.5 Z" fill="#c4c4c4"/></svg>
<svg style="left:1175px;top:711px" width="16" height="16"><path d="M0,0 L15,8 L0,16 Z" fill="#c4c4c4"/></svg>
<svg style="left:1327px;top:711px" width="23" height="17"><path d="M6,6 C12,1.5 19,3 20.5,9.5" fill="none" stroke="#c4c4c4" stroke-width="2.2"/><path d="M1,2 L1,10 L9,10 Z" fill="#c4c4c4"/><path d="M1,14.5 H22" stroke="#c4c4c4" stroke-width="2.4"/></svg>
<svg style="left:1362px;top:710px" width="115" height="18"><path d="M1,9 H28" stroke="#c4c4c4" stroke-width="2.4"/><circle cx="40" cy="9" r="5.8" fill="none" stroke="#c4c4c4" stroke-width="2.2"/><path d="M51,9 H112" stroke="#4e4e4e" stroke-width="1.6"/></svg>
<svg style="left:1488px;top:712px" width="27" height="15"><path d="M0.5,14 L7.5,4.5 L10,4.5 L4,14 Z" fill="#c4c4c4"/><path d="M7,14 L15.8,1 L25.8,14 Z" fill="#c4c4c4"/></svg>
<svg style="left:91px;top:765px" width="18" height="18"><rect x="1.2" y="1.2" width="15.6" height="15.6" fill="none" stroke="#c4c4c4" stroke-width="1.3"/><path d="M9,4.5 V13.5 M4.5,9 H13.5" stroke="#c4c4c4" stroke-width="1.2"/></svg>
<svg style="left:130px;top:765px" width="22" height="18"><path d="M0.5,2 C0.5,1 1,0.7 2,0.7 H9 L11.5,3 H21 V17.2 H0.5 Z" fill="#c4c4c4"/><path d="M2,2.2 H8.4 L10,3.8 H2 Z" fill="#323232"/></svg>
<svg style="left:170px;top:764px" width="20" height="22"><path d="M6.5,3 V1.5 C6.5,0.8 7,0.5 7.5,0.5 H12.5 C13,0.5 13.5,0.8 13.5,1.5 V3" fill="none" stroke="#c4c4c4" stroke-width="1.3"/><path d="M0,3.5 H19.5 L18.5,5 H1 Z" fill="#c4c4c4"/><path d="M1.8,5 H17.8 L16.3,20.5 H3.3 Z" fill="#c4c4c4"/><path d="M5.8,7 L6.8,18 M9.8,7 V18 M13.8,7 L12.8,18" stroke="#323232" stroke-width="1.1"/></svg>
<svg style="left:262px;top:770px" width="8" height="8"><circle cx="4" cy="4" r="3.5" fill="#c4c4c4"/></svg>
<svg style="left:289px;top:764px" width="11" height="21"><rect x="1" y="1" width="9" height="19" fill="none" stroke="#c4c4c4" stroke-width="2"/></svg>
<svg style="left:316px;top:764px" width="22" height="22"><path d="M1,10 C5,3 17,3 21,10 C17,17 5,17 1,10 Z" fill="none" stroke="#c4c4c4" stroke-width="2"/><circle cx="11" cy="10" r="3.6" fill="#c4c4c4"/><path d="M3,1 L20,20" stroke="#323232" stroke-width="3"/><path d="M3,1 L20,20" stroke="#c4c4c4" stroke-width="1.5"/></svg>
<svg style="left:351px;top:765px" width="16" height="20"><path d="M3.5,8 V5.5 C3.5,1 12.5,1 12.5,5.5 V8" fill="none" stroke="#c4c4c4" stroke-width="2.4"/><rect x="0.5" y="8" width="15" height="11.5" rx="1" fill="#c4c4c4"/><rect x="7" y="11.5" width="2.2" height="4.5" fill="#323232"/><circle cx="8.1" cy="12" r="1.6" fill="#323232"/></svg>
<div class="a" style="left:391px;top:749px;width:1145px;height:51px;background:#323232"></div>
<svg style="left:391px;top:749px" width="1145" height="30"><path d="M0,18.5 H1145" stroke="#2a2a2a" stroke-width="1"/><path d="M-0.5,18 V28" stroke="#262626" stroke-width="1"/><path d="M14.5,18 V28" stroke="#262626" stroke-width="1"/><path d="M29.5,18 V28" stroke="#262626" stroke-width="1"/><path d="M44.5,18 V28" stroke="#262626" stroke-width="1"/><path d="M59.5,18 V28" stroke="#262626" stroke-width="1"/><path d="M59.5,0 V28" stroke="#262626" stroke-width="1"/><path d="M74.5,18 V28" stroke="#262626" stroke-width="1"/><path d="M89.5,18 V28" stroke="#262626" stroke-width="1"/><path d="M104.5,18 V28" stroke="#262626" stroke-width="1"/><path d="M119.5,18 V28" stroke="#262626" stroke-width="1"/><path d="M134.5,18 V28" stroke="#262626" stroke-width="1"/><path d="M134.5,0 V28" stroke="#262626" stroke-width="1"/><path d="M149.5,18 V28" stroke="#262626" stroke-width="1"/><path d="M164.5,18 V28" stroke="#262626" stroke-width="1"/><path d="M179.5,18 V28" stroke="#262626" stroke-width="1"/><path d="M194.5,18 V28" stroke="#262626" stroke-width="1"/><path d="M209.5,18 V28" stroke="#262626" stroke-width="1"/><path d="M209.5,0 V28" stroke="#262626" stroke-width="1"/><path d="M224.5,18 V28" stroke="#262626" stroke-width="1"/><path d="M239.5,18 V28" stroke="#262626" stroke-width="1"/><path d="M254.5,18 V28" stroke="#262626" stroke-width="1"/><path d="M269.5,18 V28" stroke="#262626" stroke-width="1"/><path d="M284.5,18 V28" stroke="#262626" stroke-width="1"/><path d="M284.5,0 V28" stroke="#262626" stroke-width="1"/><path d="M299.5,18 V28" stroke="#262626" stroke-width="1"/><path d="M314.5,18 V28" stroke="#262626" stroke-width="1"/><path d="M329.5,18 V28" stroke="#262626" stroke-width="1"/><path d="M344.5,18 V28" stroke="#262626" stroke-width="1"/><path d="M359.5,18 V28" stroke="#262626" stroke-width="1"/><path d="M359.5,0 V28" stroke="#262626" stroke-width="1"/><path d="M374.5,18 V28" stroke="#262626" stroke-width="1"/><path d="M389.5,18 V28" stroke="#262626" stroke-width="1"/><path d="M404.5,18 V28" stroke="#262626" stroke-width="1"/><path d="M419.5,18 V28" stroke="#262626" stroke-width="1"/><path d="M434.5,18 V28" stroke="#262626" stroke-width="1"/><path d="M434.5,0 V28" stroke="#262626" stroke-width="1"/><path d="M449.5,18 V28" stroke="#262626" stroke-width="1"/><path d="M464.5,18 V28" stroke="#262626" stroke-width="1"/><path d="M479.5,18 V28" stroke="#262626" stroke-width="1"/><path d="M494.5,18 V28" stroke="#262626" stroke-width="1"/><path d="M509.5,18 V28" stroke="#262626" stroke-width="1"/><path d="M509.5,0 V28" stroke="#262626" stroke-width="1"/><path d="M524.5,18 V28" stroke="#262626" stroke-width="1"/><path d="M539.5,18 V28" stroke="#262626" stroke-width="1"/><path d="M554.5,18 V28" stroke="#262626" stroke-width="1"/><path d="M569.5,18 V28" stroke="#262626" stroke-width="1"/><path d="M584.5,18 V28" stroke="#262626" stroke-width="1"/><path d="M584.5,0 V28" stroke="#262626" stroke-width="1"/><path d="M599.5,18 V28" stroke="#262626" stroke-width="1"/><path d="M614.5,18 V28" stroke="#262626" stroke-width="1"/><path d="M629.5,18 V28" stroke="#262626" stroke-width="1"/><path d="M644.5,18 V28" stroke="#262626" stroke-width="1"/><path d="M659.5,18 V28" stroke="#262626" stroke-width="1"/><path d="M659.5,0 V28" stroke="#262626" stroke-width="1"/><path d="M674.5,18 V28" stroke="#262626" stroke-width="1"/><path d="M689.5,18 V28" stroke="#262626" stroke-width="1"/><path d="M704.5,18 V28" stroke="#262626" stroke-width="1"/><path d="M719.5,18 V28" stroke="#262626" stroke-width="1"/><path d="M734.5,18 V28" stroke="#262626" stroke-width="1"/><path d="M734.5,0 V28" stroke="#262626" stroke-width="1"/><path d="M749.5,18 V28" stroke="#262626" stroke-width="1"/><path d="M764.5,18 V28" stroke="#262626" stroke-width="1"/><path d="M779.5,18 V28" stroke="#262626" stroke-width="1"/><path d="M794.5,18 V28" stroke="#262626" stroke-width="1"/><path d="M809.5,18 V28" stroke="#262626" stroke-width="1"/><path d="M809.5,0 V28" stroke="#262626" stroke-width="1"/><path d="M824.5,18 V28" stroke="#262626" stroke-width="1"/><path d="M839.5,18 V28" stroke="#262626" stroke-width="1"/><path d="M854.5,18 V28" stroke="#262626" stroke-width="1"/><path d="M869.5,18 V28" stroke="#262626" stroke-width="1"/><path d="M884.5,18 V28" stroke="#262626" stroke-width="1"/><path d="M884.5,0 V28" stroke="#262626" stroke-width="1"/><path d="M899.5,18 V28" stroke="#262626" stroke-width="1"/><path d="M914.5,18 V28" stroke="#262626" stroke-width="1"/><path d="M929.5,18 V28" stroke="#262626" stroke-width="1"/><path d="M944.5,18 V28" stroke="#262626" stroke-width="1"/><path d="M959.5,18 V28" stroke="#262626" stroke-width="1"/><path d="M959.5,0 V28" stroke="#262626" stroke-width="1"/><path d="M974.5,18 V28" stroke="#262626" stroke-width="1"/><path d="M989.5,18 V28" stroke="#262626" stroke-width="1"/><path d="M1004.5,18 V28" stroke="#262626" stroke-width="1"/><path d="M1019.5,18 V28" stroke="#262626" stroke-width="1"/><path d="M1034.5,18 V28" stroke="#262626" stroke-width="1"/><path d="M1034.5,0 V28" stroke="#262626" stroke-width="1"/><path d="M1049.5,18 V28" stroke="#262626" stroke-width="1"/><path d="M1064.5,18 V28" stroke="#262626" stroke-width="1"/><path d="M1079.5,18 V28" stroke="#262626" stroke-width="1"/><path d="M1094.5,18 V28" stroke="#262626" stroke-width="1"/><path d="M1109.5,18 V28" stroke="#262626" stroke-width="1"/><path d="M1109.5,0 V28" stroke="#262626" stroke-width="1"/><path d="M1124.5,18 V28" stroke="#262626" stroke-width="1"/><path d="M1139.5,18 V28" stroke="#262626" stroke-width="1"/></svg>
<div class="a" style="left:452px;top:780px;font-size:12px;color:#9a9a9a;line-height:16px">5</div>
<div class="a" style="left:527px;top:780px;font-size:12px;color:#9a9a9a;line-height:16px">10</div>
<div class="a" style="left:602px;top:780px;font-size:12px;color:#9a9a9a;line-height:16px">15</div>
<div class="a" style="left:677px;top:780px;font-size:12px;color:#9a9a9a;line-height:16px">20</div>
<div class="a" style="left:752px;top:780px;font-size:12px;color:#9a9a9a;line-height:16px">25</div>
<div class="a" style="left:827px;top:780px;font-size:12px;color:#9a9a9a;line-height:16px">30</div>
<div class="a" style="left:902px;top:780px;font-size:12px;color:#9a9a9a;line-height:16px">35</div>
<div class="a" style="left:977px;top:780px;font-size:12px;color:#9a9a9a;line-height:16px">40</div>
<div class="a" style="left:1052px;top:780px;font-size:12px;color:#9a9a9a;line-height:16px">45</div>
<div class="a" style="left:1127px;top:780px;font-size:12px;color:#9a9a9a;line-height:16px">50</div>
<div class="a" style="left:1202px;top:780px;font-size:12px;color:#9a9a9a;line-height:16px">55</div>
<div class="a" style="left:1277px;top:780px;font-size:12px;color:#9a9a9a;line-height:16px">60</div>
<div class="a" style="left:1352px;top:780px;font-size:12px;color:#9a9a9a;line-height:16px">65</div>
<div class="a" style="left:1427px;top:780px;font-size:12px;color:#9a9a9a;line-height:16px">70</div>
<div class="a" style="left:1502px;top:780px;font-size:12px;color:#9a9a9a;line-height:16px">7</div>
<div class="a" style="left:828px;top:752px;font-size:12px;font-style:italic;color:#9a9a9a;line-height:16px">1s</div>
<div class="a" style="left:1278px;top:752px;font-size:12px;font-style:italic;color:#9a9a9a;line-height:16px">2s</div>
<div class="a" style="left:65px;top:801px;width:325px;height:29px;background:#335f92"></div>
<div class="a" style="left:65px;top:862px;width:1451px;height:1px;background:#262626"></div>
<div class="a" style="left:65px;top:893px;width:1451px;height:1px;background:#262626"></div>
<div class="a" style="left:65px;top:918px;width:1451px;height:1px;background:#262626"></div>
<div class="a" style="left:391px;top:799px;width:1145px;height:2px;background:#262626"></div>
<svg style="left:101px;top:808px" width="17" height="17"><path d="M1,1 H15.2 V15.2 H7 L1,9.2 Z" fill="#5a5a5a" stroke="#c0c0c0" stroke-width="1.2" stroke-linejoin="round"/><path d="M1,9.2 H7 V15.2" fill="none" stroke="#c0c0c0" stroke-width="1.2"/></svg>
<div class="a" style="left:126px;top:809px;font-size:13px;color:#ffffff;line-height:16px">Shop</div>
<div class="a" style="left:291px;top:808px;width:8px;height:15px;background:#ff7f0f"></div>
<svg style="left:101px;top:839px" width="17" height="17"><path d="M1,1 H15.2 V15.2 H7 L1,9.2 Z" fill="#5a5a5a" stroke="#c0c0c0" stroke-width="1.2" stroke-linejoin="round"/><path d="M1,9.2 H7 V15.2" fill="none" stroke="#c0c0c0" stroke-width="1.2"/></svg>
<div class="a" style="left:126px;top:840px;font-size:13px;color:#d6d6d6;line-height:16px">Layer_1</div>
<div class="a" style="left:291px;top:839px;width:8px;height:15px;background:#00f0f0"></div>
<svg style="left:101px;top:870px" width="17" height="17"><path d="M1,1 H15.2 V15.2 H7 L1,9.2 Z" fill="#5a5a5a" stroke="#c0c0c0" stroke-width="1.2" stroke-linejoin="round"/><path d="M1,9.2 H7 V15.2" fill="none" stroke="#c0c0c0" stroke-width="1.2"/></svg>
<div class="a" style="left:126px;top:871px;font-size:13px;color:#d6d6d6;line-height:16px">Layer_2</div>
<div class="a" style="left:291px;top:870px;width:8px;height:15px;background:#9b30d0"></div>
<svg style="left:318px;top:807px" width="19" height="19"><path d="M0.8,8.5 C4,3 14,3 17.5,8.5 C14,14 4,14 0.8,8.5 Z" fill="none" stroke="#c6c6c6" stroke-width="1.8"/><circle cx="9.2" cy="8.5" r="3" fill="#c6c6c6"/><path d="M1.5,0.5 L17.5,17.5" stroke="#335f92" stroke-width="2.6"/><path d="M1.5,0.5 L17.5,17.5" stroke="#c6c6c6" stroke-width="1.3"/></svg>
<svg style="left:352px;top:807px" width="14" height="17"><path d="M3.2,7 V5 C3.2,0.8 10.3,0.8 10.3,5 V7" fill="none" stroke="#c6c6c6" stroke-width="1.9"/><rect x="0.8" y="7" width="12" height="9.5" rx="0.8" fill="#c6c6c6"/><circle cx="6.75" cy="10.5" r="1.5" fill="#335f92"/><rect x="6" y="10.5" width="1.5" height="3.5" fill="#335f92"/></svg>
<svg style="left:391px;top:801px" width="1125" height="92"><rect x="0" y="0" width="1125" height="92" fill="#262626"/><rect x="901" y="0" width="14" height="30" fill="#2e2e2e"/><rect x="916" y="0" width="14" height="30" fill="#2e2e2e"/><rect x="931" y="0" width="14" height="30" fill="#2e2e2e"/><rect x="946" y="0" width="14" height="30" fill="#2e2e2e"/><rect x="961" y="0" width="14" height="30" fill="#3a3a3a"/><rect x="976" y="0" width="14" height="30" fill="#2e2e2e"/><rect x="991" y="0" width="14" height="30" fill="#2e2e2e"/><rect x="1006" y="0" width="14" height="30" fill="#2e2e2e"/><rect x="1021" y="0" width="14" height="30" fill="#2e2e2e"/><rect x="1036" y="0" width="14" height="30" fill="#3a3a3a"/><rect x="1051" y="0" width="14" height="30" fill="#2e2e2e"/><rect x="1066" y="0" width="14" height="30" fill="#2e2e2e"/><rect x="1081" y="0" width="14" height="30" fill="#2e2e2e"/><rect x="1096" y="0" width="14" height="30" fill="#2e2e2e"/><rect x="1111" y="0" width="14" height="30" fill="#3a3a3a"/><rect x="901" y="31" width="14" height="30" fill="#2e2e2e"/><rect x="916" y="31" width="14" height="30" fill="#2e2e2e"/><rect x="931" y="31" width="14" height="30" fill="#2e2e2e"/><rect x="946" y="31" width="14" height="30" fill="#2e2e2e"/><rect x="961" y="31" width="14" height="30" fill="#3a3a3a"/><rect x="976" y="31" width="14" height="30" fill="#2e2e2e"/><rect x="991" y="31" width="14" height="30" fill="#2e2e2e"/><rect x="1006" y="31" width="14" height="30" fill="#2e2e2e"/><rect x="1021" y="31" width="14" height="30" fill="#2e2e2e"/><rect x="1036" y="31" width="14" height="30" fill="#3a3a3a"/><rect x="1051" y="31" width="14" height="30" fill="#2e2e2e"/><rect x="1066" y="31" width="14" height="30" fill="#2e2e2e"/><rect x="1081" y="31" width="14" height="30" fill="#2e2e2e"/><rect x="1096" y="31" width="14" height="30" fill="#2e2e2e"/><rect x="1111" y="31" width="14" height="30" fill="#3a3a3a"/><rect x="136" y="62" width="14" height="30" fill="#3a3a3a"/><rect x="151" y="62" width="14" height="30" fill="#2e2e2e"/><rect x="166" y="62" width="14" height="30" fill="#2e2e2e"/><rect x="181" y="62" width="14" height="30" fill="#2e2e2e"/><rect x="196" y="62" width="14" height="30" fill="#2e2e2e"/><rect x="211" y="62" width="14" height="30" fill="#3a3a3a"/><rect x="226" y="62" width="14" height="30" fill="#2e2e2e"/><rect x="241" y="62" width="14" height="30" fill="#2e2e2e"/><rect x="256" y="62" width="14" height="30" fill="#2e2e2e"/><rect x="271" y="62" width="14" height="30" fill="#2e2e2e"/><rect x="286" y="62" width="14" height="30" fill="#3a3a3a"/><rect x="301" y="62" width="14" height="30" fill="#2e2e2e"/><rect x="316" y="62" width="14" height="30" fill="#2e2e2e"/><rect x="331" y="62" width="14" height="30" fill="#2e2e2e"/><rect x="346" y="62" width="14" height="30" fill="#2e2e2e"/><rect x="361" y="62" width="14" height="30" fill="#3a3a3a"/><rect x="376" y="62" width="14" height="30" fill="#2e2e2e"/><rect x="391" y="62" width="14" height="30" fill="#2e2e2e"/><rect x="406" y="62" width="14" height="30" fill="#2e2e2e"/><rect x="421" y="62" width="14" height="30" fill="#2e2e2e"/><rect x="436" y="62" width="14" height="30" fill="#3a3a3a"/><rect x="451" y="62" width="14" height="30" fill="#2e2e2e"/><rect x="466" y="62" width="14" height="30" fill="#2e2e2e"/><rect x="481" y="62" width="14" height="30" fill="#2e2e2e"/><rect x="496" y="62" width="14" height="30" fill="#2e2e2e"/><rect x="511" y="62" width="14" height="30" fill="#3a3a3a"/><rect x="526" y="62" width="14" height="30" fill="#2e2e2e"/><rect x="541" y="62" width="14" height="30" fill="#2e2e2e"/><rect x="556" y="62" width="14" height="30" fill="#2e2e2e"/><rect x="571" y="62" width="14" height="30" fill="#2e2e2e"/><rect x="586" y="62" width="14" height="30" fill="#3a3a3a"/><rect x="601" y="62" width="14" height="30" fill="#2e2e2e"/><rect x="616" y="62" width="14" height="30" fill="#2e2e2e"/><rect x="631" y="62" width="14" height="30" fill="#2e2e2e"/><rect x="646" y="62" width="14" height="30" fill="#2e2e2e"/><rect x="661" y="62" width="14" height="30" fill="#3a3a3a"/><rect x="676" y="62" width="14" height="30" fill="#2e2e2e"/><rect x="691" y="62" width="14" height="30" fill="#2e2e2e"/><rect x="706" y="62" width="14" height="30" fill="#2e2e2e"/><rect x="721" y="62" width="14" height="30" fill="#2e2e2e"/><rect x="736" y="62" width="14" height="30" fill="#3a3a3a"/><rect x="751" y="62" width="14" height="30" fill="#2e2e2e"/><rect x="766" y="62" width="14" height="30" fill="#2e2e2e"/><rect x="781" y="62" width="14" height="30" fill="#2e2e2e"/><rect x="796" y="62" width="14" height="30" fill="#2e2e2e"/><rect x="811" y="62" width="14" height="30" fill="#3a3a3a"/><rect x="826" y="62" width="14" height="30" fill="#2e2e2e"/><rect x="841" y="62" width="14" height="30" fill="#2e2e2e"/><rect x="856" y="62" width="14" height="30" fill="#2e2e2e"/><rect x="871" y="62" width="14" height="30" fill="#2e2e2e"/><rect x="886" y="62" width="14" height="30" fill="#3a3a3a"/><rect x="901" y="62" width="14" height="30" fill="#2e2e2e"/><rect x="916" y="62" width="14" height="30" fill="#2e2e2e"/><rect x="931" y="62" width="14" height="30" fill="#2e2e2e"/><rect x="946" y="62" width="14" height="30" fill="#2e2e2e"/><rect x="961" y="62" width="14" height="30" fill="#3a3a3a"/><rect x="976" y="62" width="14" height="30" fill="#2e2e2e"/><rect x="991" y="62" width="14" height="30" fill="#2e2e2e"/><rect x="1006" y="62" width="14" height="30" fill="#2e2e2e"/><rect x="1021" y="62" width="14" height="30" fill="#2e2e2e"/><rect x="1036" y="62" width="14" height="30" fill="#3a3a3a"/><rect x="1051" y="62" width="14" height="30" fill="#2e2e2e"/><rect x="1066" y="62" width="14" height="30" fill="#2e2e2e"/><rect x="1081" y="62" width="14" height="30" fill="#2e2e2e"/><rect x="1096" y="62" width="14" height="30" fill="#2e2e2e"/><rect x="1111" y="62" width="14" height="30" fill="#3a3a3a"/><rect x="1" y="0" width="899" height="30" fill="#959595"/><rect x="1" y="31" width="133" height="30" fill="#959595"/><rect x="136" y="31" width="764" height="30" fill="#959595"/><rect x="1" y="62" width="133" height="30" fill="#959595"/><rect x="12.5" y="1.5" width="1.6" height="1.6" fill="#2a2a2a"/><rect x="12.5" y="32.5" width="1.6" height="1.6" fill="#2a2a2a"/><rect x="12.5" y="63.5" width="1.6" height="1.6" fill="#2a2a2a"/><rect x="27.5" y="1.5" width="1.6" height="1.6" fill="#2a2a2a"/><rect x="27.5" y="32.5" width="1.6" height="1.6" fill="#2a2a2a"/><rect x="27.5" y="63.5" width="1.6" height="1.6" fill="#2a2a2a"/><rect x="42.5" y="1.5" width="1.6" height="1.6" fill="#2a2a2a"/><rect x="42.5" y="32.5" width="1.6" height="1.6" fill="#2a2a2a"/><rect x="42.5" y="63.5" width="1.6" height="1.6" fill="#2a2a2a"/><rect x="57.5" y="1.5" width="1.6" height="1.6" fill="#2a2a2a"/><rect x="57.5" y="32.5" width="1.6" height="1.6" fill="#2a2a2a"/><rect x="57.5" y="63.5" width="1.6" height="1.6" fill="#2a2a2a"/><rect x="72.5" y="1.5" width="1.6" height="1.6" fill="#2a2a2a"/><rect x="72.5" y="32.5" width="1.6" height="1.6" fill="#2a2a2a"/><rect x="72.5" y="63.5" width="1.6" height="1.6" fill="#2a2a2a"/><rect x="87.5" y="1.5" width="1.6" height="1.6" fill="#2a2a2a"/><rect x="87.5" y="32.5" width="1.6" height="1.6" fill="#2a2a2a"/><rect x="87.5" y="63.5" width="1.6" height="1.6" fill="#2a2a2a"/><rect x="102.5" y="1.5" width="1.6" height="1.6" fill="#2a2a2a"/><rect x="102.5" y="32.5" width="1.6" height="1.6" fill="#2a2a2a"/><rect x="102.5" y="63.5" width="1.6" height="1.6" fill="#2a2a2a"/><rect x="117.5" y="1.5" width="1.6" height="1.6" fill="#2a2a2a"/><rect x="117.5" y="32.5" width="1.6" height="1.6" fill="#2a2a2a"/><rect x="117.5" y="63.5" width="1.6" height="1.6" fill="#2a2a2a"/><rect x="132.5" y="1.5" width="1.6" height="1.6" fill="#2a2a2a"/><rect x="147.5" y="1.5" width="1.6" height="1.6" fill="#2a2a2a"/><rect x="147.5" y="32.5" width="1.6" height="1.6" fill="#2a2a2a"/><rect x="162.5" y="1.5" width="1.6" height="1.6" fill="#2a2a2a"/><rect x="162.5" y="32.5" width="1.6" height="1.6" fill="#2a2a2a"/><rect x="177.5" y="1.5" width="1.6" height="1.6" fill="#2a2a2a"/><rect x="177.5" y="32.5" width="1.6" height="1.6" fill="#2a2a2a"/><rect x="192.5" y="1.5" width="1.6" height="1.6" fill="#2a2a2a"/><rect x="192.5" y="32.5" width="1.6" height="1.6" fill="#2a2a2a"/><rect x="207.5" y="1.5" width="1.6" height="1.6" fill="#2a2a2a"/><rect x="207.5" y="32.5" width="1.6" height="1.6" fill="#2a2a2a"/><rect x="222.5" y="1.5" width="1.6" height="1.6" fill="#2a2a2a"/><rect x="222.5" y="32.5" width="1.6" height="1.6" fill="#2a2a2a"/><rect x="237.5" y="1.5" width="1.6" height="1.6" fill="#2a2a2a"/><rect x="237.5" y="32.5" width="1.6" height="1.6" fill="#2a2a2a"/><rect x="252.5" y="1.5" width="1.6" height="1.6" fill="#2a2a2a"/><rect x="252.5" y="32.5" width="1.6" height="1.6" fill="#2a2a2a"/><rect x="267.5" y="1.5" width="1.6" height="1.6" fill="#2a2a2a"/><rect x="267.5" y="32.5" width="1.6" height="1.6" fill="#2a2a2a"/><rect x="282.5" y="1.5" width="1.6" height="1.6" fill="#2a2a2a"/><rect x="282.5" y="32.5" width="1.6" height="1.6" fill="#2a2a2a"/><rect x="297.5" y="1.5" width="1.6" height="1.6" fill="#2a2a2a"/><rect x="297.5" y="32.5" width="1.6" height="1.6" fill="#2a2a2a"/><rect x="312.5" y="1.5" width="1.6" height="1.6" fill="#2a2a2a"/><rect x="312.5" y="32.5" width="1.6" height="1.6" fill="#2a2a2a"/><rect x="327.5" y="1.5" width="1.6" height="1.6" fill="#2a2a2a"/><rect x="327.5" y="32.5" width="1.6" height="1.6" fill="#2a2a2a"/><rect x="342.5" y="1.5" width="1.6" height="1.6" fill="#2a2a2a"/><rect x="342.5" y="32.5" width="1.6" height="1.6" fill="#2a2a2a"/><rect x="357.5" y="1.5" width="1.6" height="1.6" fill="#2a2a2a"/><rect x="357.5" y="32.5" width="1.6" height="1.6" fill="#2a2a2a"/><rect x="372.5" y="1.5" width="1.6" height="1.6" fill="#2a2a2a"/><rect x="372.5" y="32.5" width="1.6" height="1.6" fill="#2a2a2a"/><rect x="387.5" y="1.5" width="1.6" height="1.6" fill="#2a2a2a"/><rect x="387.5" y="32.5" width="1.6" height="1.6" fill="#2a2a2a"/><rect x="402.5" y="1.5" width="1.6" height="1.6" fill="#2a2a2a"/><rect x="402.5" y="32.5" width="1.6" height="1.6" fill="#2a2a2a"/><rect x="417.5" y="1.5" width="1.6" height="1.6" fill="#2a2a2a"/><rect x="417.5" y="32.5" width="1.6" height="1.6" fill="#2a2a2a"/><rect x="432.5" y="1.5" width="1.6" height="1.6" fill="#2a2a2a"/><rect x="432.5" y="32.5" width="1.6" height="1.6" fill="#2a2a2a"/><rect x="447.5" y="1.5" width="1.6" height="1.6" fill="#2a2a2a"/><rect x="447.5" y="32.5" width="1.6" height="1.6" fill="#2a2a2a"/><rect x="462.5" y="1.5" width="1.6" height="1.6" fill="#2a2a2a"/><rect x="462.5" y="32.5" width="1.6" height="1.6" fill="#2a2a2a"/><rect x="477.5" y="1.5" width="1.6" height="1.6" fill="#2a2a2a"/><rect x="477.5" y="32.5" width="1.6" height="1.6" fill="#2a2a2a"/><rect x="492.5" y="1.5" width="1.6" height="1.6" fill="#2a2a2a"/><rect x="492.5" y="32.5" width="1.6" height="1.6" fill="#2a2a2a"/><rect x="507.5" y="1.5" width="1.6" height="1.6" fill="#2a2a2a"/><rect x="507.5" y="32.5" width="1.6" height="1.6" fill="#2a2a2a"/><rect x="522.5" y="1.5" width="1.6" height="1.6" fill="#2a2a2a"/><rect x="522.5" y="32.5" width="1.6" height="1.6" fill="#2a2a2a"/><rect x="537.5" y="1.5" width="1.6" height="1.6" fill="#2a2a2a"/><rect x="537.5" y="32.5" width="1.6" height="1.6" fill="#2a2a2a"/><rect x="552.5" y="1.5" width="1.6" height="1.6" fill="#2a2a2a"/><rect x="552.5" y="32.5" width="1.6" height="1.6" fill="#2a2a2a"/><rect x="567.5" y="1.5" width="1.6" height="1.6" fill="#2a2a2a"/><rect x="567.5" y="32.5" width="1.6" height="1.6" fill="#2a2a2a"/><rect x="582.5" y="1.5" width="1.6" height="1.6" fill="#2a2a2a"/><rect x="582.5" y="32.5" width="1.6" height="1.6" fill="#2a2a2a"/><rect x="597.5" y="1.5" width="1.6" height="1.6" fill="#2a2a2a"/><rect x="597.5" y="32.5" width="1.6" height="1.6" fill="#2a2a2a"/><rect x="612.5" y="1.5" width="1.6" height="1.6" fill="#2a2a2a"/><rect x="612.5" y="32.5" width="1.6" height="1.6" fill="#2a2a2a"/><rect x="627.5" y="1.5" width="1.6" height="1.6" fill="#2a2a2a"/><rect x="627.5" y="32.5" width="1.6" height="1.6" fill="#2a2a2a"/><rect x="642.5" y="1.5" width="1.6" height="1.6" fill="#2a2a2a"/><rect x="642.5" y="32.5" width="1.6" height="1.6" fill="#2a2a2a"/><rect x="657.5" y="1.5" width="1.6" height="1.6" fill="#2a2a2a"/><rect x="657.5" y="32.5" width="1.6" height="1.6" fill="#2a2a2a"/><rect x="672.5" y="1.5" width="1.6" height="1.6" fill="#2a2a2a"/><rect x="672.5" y="32.5" width="1.6" height="1.6" fill="#2a2a2a"/><rect x="687.5" y="1.5" width="1.6" height="1.6" fill="#2a2a2a"/><rect x="687.5" y="32.5" width="1.6" height="1.6" fill="#2a2a2a"/><rect x="702.5" y="1.5" width="1.6" height="1.6" fill="#2a2a2a"/><rect x="702.5" y="32.5" width="1.6" height="1.6" fill="#2a2a2a"/><rect x="717.5" y="1.5" width="1.6" height="1.6" fill="#2a2a2a"/><rect x="717.5" y="32.5" width="1.6" height="1.6" fill="#2a2a2a"/><rect x="732.5" y="1.5" width="1.6" height="1.6" fill="#2a2a2a"/><rect x="732.5" y="32.5" width="1.6" height="1.6" fill="#2a2a2a"/><rect x="747.5" y="1.5" width="1.6" height="1.6" fill="#2a2a2a"/><rect x="747.5" y="32.5" width="1.6" height="1.6" fill="#2a2a2a"/><rect x="762.5" y="1.5" width="1.6" height="1.6" fill="#2a2a2a"/><rect x="762.5" y="32.5" width="1.6" height="1.6" fill="#2a2a2a"/><rect x="777.5" y="1.5" width="1.6" height="1.6" fill="#2a2a2a"/><rect x="777.5" y="32.5" width="1.6" height="1.6" fill="#2a2a2a"/><rect x="792.5" y="1.5" width="1.6" height="1.6" fill="#2a2a2a"/><rect x="792.5" y="32.5" width="1.6" height="1.6" fill="#2a2a2a"/><rect x="807.5" y="1.5" width="1.6" height="1.6" fill="#2a2a2a"/><rect x="807.5" y="32.5" width="1.6" height="1.6" fill="#2a2a2a"/><rect x="822.5" y="1.5" width="1.6" height="1.6" fill="#2a2a2a"/><rect x="822.5" y="32.5" width="1.6" height="1.6" fill="#2a2a2a"/><rect x="837.5" y="1.5" width="1.6" height="1.6" fill="#2a2a2a"/><rect x="837.5" y="32.5" width="1.6" height="1.6" fill="#2a2a2a"/><rect x="852.5" y="1.5" width="1.6" height="1.6" fill="#2a2a2a"/><rect x="852.5" y="32.5" width="1.6" height="1.6" fill="#2a2a2a"/><rect x="867.5" y="1.5" width="1.6" height="1.6" fill="#2a2a2a"/><rect x="867.5" y="32.5" width="1.6" height="1.6" fill="#2a2a2a"/><rect x="882.5" y="1.5" width="1.6" height="1.6" fill="#2a2a2a"/><rect x="882.5" y="32.5" width="1.6" height="1.6" fill="#2a2a2a"/><circle cx="7.5" cy="21" r="3.5" fill="#262626"/><circle cx="7.5" cy="52" r="3.5" fill="#262626"/><circle cx="7.5" cy="83" r="3.5" fill="#262626"/><circle cx="142.1" cy="51.7" r="3.6" fill="#262626"/><rect x="129" y="46" width="2.8" height="10" fill="#262626"/><rect x="129" y="77" width="2.8" height="10" fill="#262626"/><rect x="894.5" y="15" width="2.8" height="10" fill="#262626"/><rect x="894.5" y="46" width="2.8" height="10" fill="#262626"/></svg>
<svg style="left:391px;top:749px" width="16" height="170"><path d="M1,0 H14 V45 L7.5,51 L1,45 Z" fill="#3c7bc9"/><path d="M7.5,50 V168" stroke="#4083d2" stroke-width="1.8"/></svg>
<div class="a" style="left:393px;top:926px;width:131px;height:5px;border-radius:3px;background:#636363"></div>
</body></html>
